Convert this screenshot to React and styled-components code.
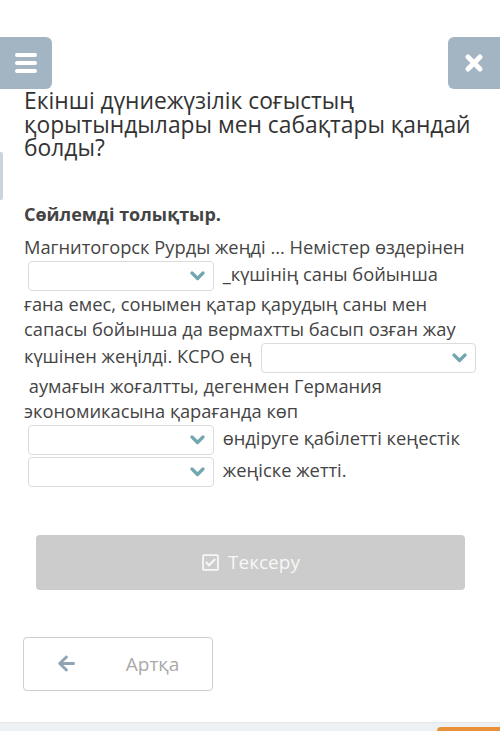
import React from 'react';
import styled, { createGlobalStyle } from 'styled-components';
import { FaArrowLeft, FaRegCheckSquare } from 'react-icons/fa';

const GlobalStyle = createGlobalStyle`
  html, body {
    margin: 0;
    padding: 0;
    background: #fff;
  }
  body {
    font-family: "Open Sans", "Noto Sans", sans-serif;
    color: #444;
  }
  * {
    box-sizing: border-box;
  }
`;

const Page = styled.div`
  position: relative;
  display: flex;
  flex-direction: column;
  min-height: 100vh;
  overflow: hidden;
`;

const TopBar = styled.div`
  display: flex;
  justify-content: space-between;
  padding-top: 37px;
`;

const SquareButton = styled.button`
  width: 52px;
  height: 52px;
  border: none;
  padding: 0;
  display: flex;
  align-items: center;
  justify-content: center;
  background: #a3b5c3;
  color: #fff;
  border-radius: ${({ side }) => (side === 'left' ? '0 6px 6px 0' : '6px 0 0 6px')};
`;

const SideTab = styled.div`
  position: absolute;
  left: 0;
  top: 152px;
  width: 3px;
  height: 48px;
  background: #c9d4dc;
  border-radius: 0 2px 2px 0;
`;

const Title = styled.h1`
  margin: 0;
  padding: 0 20px 0 24px;
  font-size: 22.8px;
  line-height: 23.5px;
  font-weight: 400;
  color: #333;
`;

const TaskHeading = styled.h2`
  margin: 42px 0 0;
  padding: 0 24px;
  font-size: 18px;
  line-height: 24px;
  font-weight: 700;
  color: #444;
`;

const Sentence = styled.p`
  margin: 8px 0 0;
  padding: 0 16px 0 24px;
  font-size: 18.3px;
  line-height: 25px;
  color: #444;
`;

const Dropdown = styled.span`
  display: inline-flex;
  align-items: center;
  justify-content: flex-end;
  width: ${({ width }) => width}px;
  height: 30px;
  margin: 2px 4px 0;
  padding-right: 8px;
  vertical-align: 0;
  border: 1px solid #dcdcdc;
  border-radius: 4px;
  background: #fff;
  color: #72a7b2;
`;

const CheckButton = styled.button`
  display: flex;
  align-items: center;
  justify-content: center;
  gap: 8px;
  height: 55px;
  margin: 48px 35px 0 36px;
  border: none;
  border-radius: 4px;
  background: #cccccc;
  color: #f7f7f7;
  font-family: "Open Sans", sans-serif;
  font-size: 19px;
  svg {
    font-size: 19px;
  }
`;

const BackButton = styled.button`
  display: flex;
  align-items: center;
  justify-content: center;
  gap: 50px;
  width: 190px;
  height: 54px;
  margin: 47px 0 0 23px;
  border: 1px solid #cfcfcf;
  border-radius: 4px;
  background: #fff;
  color: #a9a9a9;
  font-family: "Open Sans", sans-serif;
  font-size: 19px;
  svg {
    color: #8fa4b4;
    font-size: 19px;
  }
`;

const Footer = styled.div`
  display: flex;
  justify-content: flex-end;
  align-items: flex-end;
  height: 9px;
  margin-top: auto;
  background: #eef1f3;
  border-top: 1px solid #e4e8eb;
`;

const FooterTab = styled.div`
  width: 63px;
  height: 4px;
  background: #e8913a;
  border-radius: 4px 0 0 0;
`;

// menu: three rounded white bars
const MenuIcon = () => (
  <svg width="24" height="22" viewBox="0 0 24 22">
    <g stroke="#fff" strokeWidth="4" strokeLinecap="round">
      <line x1="3" y1="3" x2="21" y2="3" />
      <line x1="3" y1="11" x2="21" y2="11" />
      <line x1="3" y1="19" x2="21" y2="19" />
    </g>
  </svg>
);

const CloseIcon = () => (
  <svg width="20" height="20" viewBox="0 0 20 20">
    <g stroke="#fff" strokeWidth="5" strokeLinecap="round">
      <line x1="4" y1="4" x2="16" y2="16" />
      <line x1="16" y1="4" x2="4" y2="16" />
    </g>
  </svg>
);

const Chevron = () => (
  <svg width="15" height="10" viewBox="0 0 15 10">
    <polyline points="2,2 7.5,7.5 13,2" fill="none" stroke="currentColor" strokeWidth="3.2" strokeLinecap="round" strokeLinejoin="round" />
  </svg>
);

const Select = ({ width = 186 }) => (
  <Dropdown width={width}>
    <Chevron />
  </Dropdown>
);

export default function App() {
  return (
    <Page>
      <GlobalStyle />
      <SideTab />
      <TopBar>
        <SquareButton side="left"><MenuIcon /></SquareButton>
        <SquareButton side="right"><CloseIcon /></SquareButton>
      </TopBar>
      <Title>Екінші дүниежүзілік соғыстың қорытындылары мен сабақтары қандай болды?</Title>
      <TaskHeading>Сөйлемді толықтыр.</TaskHeading>
      <Sentence>
        Магнитогорск Рурды жеңді ... Немістер өздерінен<br />
        <Select /> _күшінің саны бойынша<br />
        ғана емес, сонымен қатар қарудың саны мен<br />
        сапасы бойынша да вермахтты басып озған жау<br />
        күшінен жеңілді. КСРО ең <Select width={215} /><br />
        &nbsp;аумағын жоғалтты, дегенмен Германия<br />
        экономикасына қарағанда көп<br />
        <Select /> өндіруге қабілетті кеңестік<br />
        <Select /> жеңіске жетті.
      </Sentence>
      <CheckButton><FaRegCheckSquare /> Тексеру</CheckButton>
      <BackButton><FaArrowLeft /> Артқа</BackButton>
      <Footer><FooterTab /></Footer>
    </Page>
  );
}
